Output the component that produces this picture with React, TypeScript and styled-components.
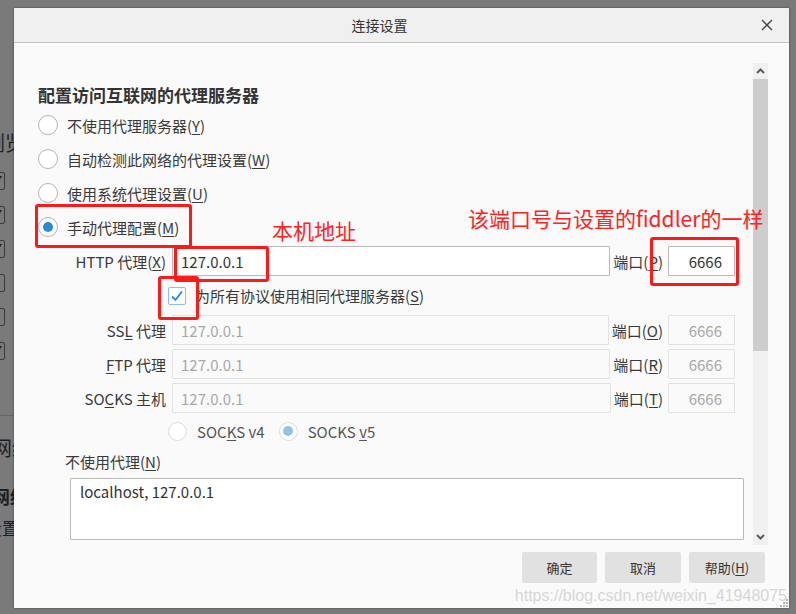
import React from "react";
import styled, { createGlobalStyle } from "styled-components";

const GlobalStyle = createGlobalStyle`
    html, body {
        margin: 0;
        padding: 0;
        background: #7a7a7a;
    }
    body {
        font-family: "Noto Sans CJK SC", "Noto Sans", sans-serif;
        color: #3a3a3a;
    }
    * {
        box-sizing: border-box;
    }
`;

const Backdrop = styled.div`
    width: 796px;
    height: 614px;
    display: flex;
    align-items: flex-start;
    overflow: hidden;
    background: #7a7a7a;
`;

/* the dimmed options page that peeks out left of the dialog */
const BackPage = styled.div`
    width: 14px;
    height: 614px;
    flex: none;
    overflow: hidden;
    display: flex;
    flex-direction: column;
    color: #1e1e1e;
`;

interface BackTextProps {
    $top: number;
    $size: number;
    $left: number;
    $bold?: boolean;
}

const BackText = styled.div<BackTextProps>`
    margin-top: ${p => p.$top}px;
    margin-left: ${p => p.$left}px;
    font-size: ${p => p.$size}px;
    font-weight: ${p => (p.$bold ? 700 : 400)};
    line-height: 22px;
    white-space: nowrap;
`;

const BackSelects = styled.div`
    margin-top: 18px;
    display: flex;
    flex-direction: column;
    gap: 16px;
`;

const BackSelect = styled.div`
    width: 20px;
    height: 18px;
    margin-left: -15px;
    border: 1px solid #3a3a3a;
    border-radius: 2px;
    display: flex;
    justify-content: flex-end;
    align-items: flex-start;
    padding: 3px 2px 0 0;
`;

const BackDivider = styled.div`
    margin-top: 55px;
    height: 1px;
    background: #656565;
`;

const Dialog = styled.div`
    margin-top: 8px;
    width: 775px;
    height: 600px;
    flex: none;
    background: #fafafa;
    display: flex;
    flex-direction: column;
    position: relative;
    box-shadow: 0 0 2px rgba(0, 0, 0, 0.5);
`;

const TitleBar = styled.div`
    height: 35px;
    flex: none;
    display: flex;
    align-items: center;
    background: #f0f0f0;
    border-bottom: 1px solid #c2c2c2;
`;

const Title = styled.div`
    flex: 1;
    text-align: center;
    font-size: 14px;
    color: #333;
`;

const CloseButton = styled.div`
    width: 44px;
    height: 34px;
    display: flex;
    align-items: center;
    justify-content: center;
`;

const Body = styled.div`
    flex: 1;
    display: flex;
    flex-direction: column;
    padding: 20px 21px 0 0;
`;

const ScrollArea = styled.div`
    height: 482px;
    flex: none;
    display: flex;
`;

const Content = styled.div`
    flex: 1;
    min-width: 0;
    padding: 20px 18px 0 24px;
    display: flex;
    flex-direction: column;
`;

const Heading = styled.h2`
    margin: 0 0 1px;
    font-size: 17px;
    font-weight: 700;
    line-height: 24px;
    color: #333;
`;

const RadioRow = styled.label`
    height: 34px;
    display: inline-flex;
    align-items: center;
    gap: 9px;
    font-size: 15px;
    white-space: nowrap;
`;

interface RadioProps {
    $checked?: boolean;
    $disabled?: boolean;
    $size?: number;
}

const Radio = styled.span<RadioProps>`
    width: ${p => p.$size ?? 20}px;
    height: ${p => p.$size ?? 20}px;
    flex: none;
    border-radius: 50%;
    border: 1px solid ${p => (p.$disabled ? "#dcdcdc" : "#b4b4b4")};
    background: #fff;
    display: flex;
    align-items: center;
    justify-content: center;
    &::after {
        content: "";
        display: ${p => (p.$checked ? "block" : "none")};
        width: 10px;
        height: 10px;
        border-radius: 50%;
        background: ${p => (p.$disabled ? "#8fc4e6" : "#2a8cd8")};
    }
`;

const Key = styled.u`
    text-decoration-thickness: 1px;
    text-underline-offset: 2px;
`;

const ManualRow = styled.div`
    height: 34px;
    display: grid;
    grid-template-columns: 234px 196px auto;
    align-items: start;
`;

interface AnnotatedProps {
    $top: number;
    $left: number;
    $w: number;
    $h: number;
    $grow?: boolean;
}

/* red marker boxes drawn over the screenshot */
const Annotated = styled.div<AnnotatedProps>`
    position: relative;
    display: flex;
    flex: ${p => (p.$grow ? 1 : "none")};
    min-width: 0;
    justify-self: start;
    &::after {
        content: "";
        position: absolute;
        top: ${p => p.$top}px;
        left: ${p => p.$left}px;
        width: ${p => p.$w}px;
        height: ${p => p.$h}px;
        border: 3px solid #ff1a1a;
        border-radius: 3px;
        pointer-events: none;
        z-index: 2;
    }
`;

interface NoteProps {
    $shift: number;
}

const Note = styled.span<NoteProps>`
    margin-top: ${p => p.$shift}px;
    font-size: 21px;
    line-height: 24px;
    color: #ff2222;
    white-space: nowrap;
    position: relative;
    z-index: 3;
`;

interface FieldRowProps {
    $gap: number;
}

const FieldRow = styled.div<FieldRowProps>`
    height: 30px;
    margin-top: ${p => p.$gap}px;
    display: flex;
    align-items: center;
    font-size: 15px;
`;

const FieldLabel = styled.span`
    width: 128px;
    flex: none;
    margin-right: 6px;
    text-align: right;
    white-space: nowrap;
`;

interface TextFieldProps {
    $disabled?: boolean;
}

const TextField = styled.input<TextFieldProps>`
    flex: 1;
    min-width: 0;
    height: 30px;
    padding: 0 8px;
    border: 1px solid ${p => (p.$disabled ? "#e2e2e2" : "#b9b9b9")};
    border-radius: 1px;
    background: ${p => (p.$disabled ? "#fafafa" : "#fff")};
    color: ${p => (p.$disabled ? "#a8a8a8" : "#333")};
    font-family: inherit;
    font-size: 15px;
    outline: none;
`;

const PortLabel = styled.span`
    flex: none;
    margin-left: 3px;
    white-space: nowrap;
`;

const PortField = styled(TextField)`
    flex: none;
    width: 67px;
    margin-left: 5px;
    padding-right: 12px;
    text-align: right;
`;

const CheckRow = styled.label`
    height: 39px;
    padding-left: 130px;
    display: flex;
    align-items: center;
    gap: 9px;
    font-size: 15px;
`;

const Checkbox = styled.span`
    width: 18px;
    height: 18px;
    flex: none;
    border: 1px solid #8fbbe6;
    border-radius: 2px;
    background: #fff;
    display: flex;
    align-items: center;
    justify-content: center;
`;

const SocksRow = styled.div`
    height: 28px;
    margin-top: 4px;
    padding-left: 130px;
    display: flex;
    align-items: center;
    gap: 14px;
    font-size: 15px;
`;

const SocksOption = styled.label`
    display: flex;
    align-items: center;
    gap: 10px;
    color: #555;
`;

const NoProxyLabel = styled.div`
    margin-top: 4px;
    padding-left: 27px;
    line-height: 26px;
    font-size: 15px;
`;

const NoProxyBox = styled.textarea`
    height: 62px;
    margin: 3px -9px 0 32px;
    padding: 3px 9px;
    border: 1px solid #b9b9b9;
    border-radius: 1px;
    background: #fff;
    color: #333;
    font-family: inherit;
    font-size: 15px;
    line-height: 20px;
    resize: none;
    outline: none;
`;

const Scrollbar = styled.div`
    width: 15px;
    flex: none;
    display: flex;
    flex-direction: column;
    background: #f0f0f0;
`;

const ScrollArrow = styled.div`
    height: 16px;
    flex: none;
    display: flex;
    align-items: center;
    justify-content: center;
`;

const ScrollThumb = styled.div`
    height: 272px;
    flex: none;
    background: #cdcdcd;
`;

const ScrollTrack = styled.div`
    flex: 1;
`;

const Footer = styled.div`
    display: flex;
    justify-content: flex-end;
    gap: 8px;
    padding: 7px 3px 0 0;
`;

interface ButtonProps {
    $w: number;
}

const Button = styled.button<ButtonProps>`
    width: ${p => p.$w}px;
    height: 31px;
    border: none;
    border-radius: 2px;
    background: #e1e1e1;
    color: #333;
    font-family: inherit;
    font-size: 13px;
    padding: 0;
`;

const Watermark = styled.div`
    position: absolute;
    right: 2px;
    bottom: 2px;
    font-family: "Liberation Sans", Arial, sans-serif;
    font-size: 16px;
    line-height: 20px;
    color: #d6d6d6;
    pointer-events: none;
`;

const Grip = styled.svg`
    position: absolute;
    right: 1px;
    bottom: 1px;
`;

const Chevron = ({ down }: { down?: boolean }) => (
    <svg width="9" height="6" viewBox="0 0 9 6">
        <polyline
            points={down ? "1,1 4.5,4.5 8,1" : "1,5 4.5,1.5 8,5"}
            fill="none"
            stroke="#5c5c5c"
            strokeWidth="2"
        />
    </svg>
);

const BackCaret = () => (
    <svg width="5" height="4" viewBox="0 0 5 4">
        <polygon points="0,0 5,0 2.5,4" fill="#1e1e1e" />
    </svg>
);

const CheckMark = () => (
    <svg width="14" height="14" viewBox="0 0 14 14">
        <polyline points="2,7.5 5.5,11 12,2.5" fill="none" stroke="#1e88e5" strokeWidth="1.8" />
    </svg>
);

function App() {
    const proxies = [
        { label: <>SS<Key>L</Key> 代理</>, port: <>端口(<Key>O</Key>)</> },
        { label: <><Key>F</Key>TP 代理</>, port: <>端口(<Key>R</Key>)</> },
        { label: <>SO<Key>C</Key>KS 主机</>, port: <>端口(<Key>T</Key>)</> },
    ];

    return (
        <Backdrop>
            <GlobalStyle />
            <BackPage>
                <BackText $top={132} $size={20} $left={-15}>浏览</BackText>
                <BackSelects>
                    {[true, true, true, false, false, true].map((caret, i) => (
                        <BackSelect key={i}>{caret && <BackCaret />}</BackSelect>
                    ))}
                </BackSelects>
                <BackDivider />
                <BackText $top={21} $size={20} $left={-8}>网络</BackText>
                <BackText $top={26} $size={18} $left={-8} $bold>网络</BackText>
                <BackText $top={10} $size={17} $left={-15}>设置</BackText>
            </BackPage>

            <Dialog>
                <TitleBar>
                    <Title>连接设置</Title>
                    <CloseButton>
                        <svg width="12" height="12" viewBox="0 0 12 12">
                            <path d="M1 1 L11 11 M11 1 L1 11" stroke="#444" strokeWidth="1.4" />
                        </svg>
                    </CloseButton>
                </TitleBar>

                <Body>
                    <ScrollArea>
                        <Content>
                            <Heading>配置访问互联网的代理服务器</Heading>
                            <div>
                                <RadioRow><Radio /><span>不使用代理服务器(<Key>Y</Key>)</span></RadioRow>
                            </div>
                            <div>
                                <RadioRow><Radio /><span>自动检测此网络的代理设置(<Key>W</Key>)</span></RadioRow>
                            </div>
                            <div>
                                <RadioRow><Radio /><span>使用系统代理设置(<Key>U</Key>)</span></RadioRow>
                            </div>
                            <ManualRow>
                                <Annotated $top={-6} $left={-3} $w={151} $h={38}>
                                    <RadioRow><Radio $checked /><span>手动代理配置(<Key>M</Key>)</span></RadioRow>
                                </Annotated>
                                <Note $shift={8}>本机地址</Note>
                                <Note $shift={-4}>该端口号与设置的fiddler的一样</Note>
                            </ManualRow>

                            <FieldRow $gap={2}>
                                <FieldLabel>HTTP 代理(<Key>X</Key>)</FieldLabel>
                                <Annotated $top={0} $left={2} $w={89} $h={30} $grow>
                                    <TextField readOnly value="127.0.0.1" />
                                </Annotated>
                                <PortLabel>端口(<Key>P</Key>)</PortLabel>
                                <Annotated $top={-9} $left={-13} $w={83} $h={43}>
                                    <PortField readOnly value="6666" />
                                </Annotated>
                            </FieldRow>

                            <CheckRow>
                                <Annotated $top={-11} $left={-10} $w={35} $h={38}>
                                    <Checkbox><CheckMark /></Checkbox>
                                </Annotated>
                                <span>为所有协议使用相同代理服务器(<Key>S</Key>)</span>
                            </CheckRow>

                            {proxies.map((p, i) => (
                                <FieldRow key={i} $gap={i === 0 ? 0 : 4}>
                                    <FieldLabel>{p.label}</FieldLabel>
                                    <TextField $disabled readOnly value="127.0.0.1" />
                                    <PortLabel>{p.port}</PortLabel>
                                    <PortField $disabled readOnly value="6666" />
                                </FieldRow>
                            ))}

                            <SocksRow>
                                <SocksOption>
                                    <Radio $disabled $size={19} />
                                    <span>SOC<Key>K</Key>S v4</span>
                                </SocksOption>
                                <SocksOption>
                                    <Radio $disabled $checked $size={19} />
                                    <span>SOCKS <Key>v</Key>5</span>
                                </SocksOption>
                            </SocksRow>

                            <NoProxyLabel>不使用代理(<Key>N</Key>)</NoProxyLabel>
                            <NoProxyBox readOnly value="localhost, 127.0.0.1" />
                        </Content>

                        <Scrollbar>
                            <ScrollArrow><Chevron /></ScrollArrow>
                            <ScrollThumb />
                            <ScrollTrack />
                            <ScrollArrow><Chevron down /></ScrollArrow>
                        </Scrollbar>
                    </ScrollArea>

                    <Footer>
                        <Button $w={75}>确定</Button>
                        <Button $w={76}>取消</Button>
                        <Button $w={76}>帮助(<Key>H</Key>)</Button>
                    </Footer>
                </Body>

                <Watermark>https://blog.csdn.net/weixin_41948075</Watermark>
                <Grip width="9" height="9" viewBox="0 0 9 9">
                    {[[7, 1], [4, 4], [7, 4], [1, 7], [4, 7], [7, 7]].map(([x, y], i) => (
                        <rect key={i} x={x} y={y} width="2" height="2" fill="#b5b5b5" />
                    ))}
                </Grip>
            </Dialog>
        </Backdrop>
    );
}

export default App;
